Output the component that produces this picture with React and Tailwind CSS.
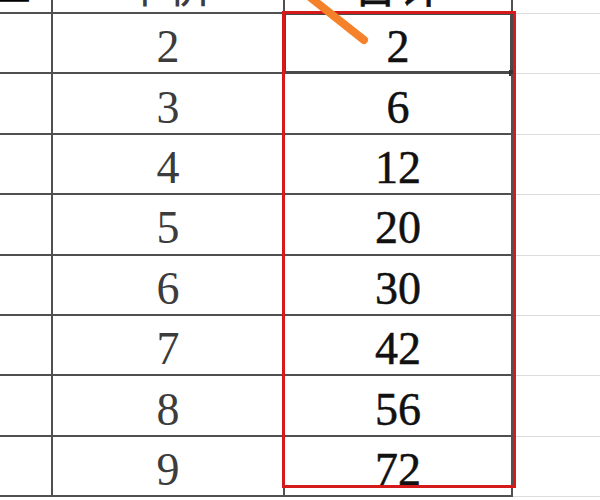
import React from 'react';

const ROWS = [
  [2, 2],
  [3, 6],
  [4, 12],
  [5, 20],
  [6, 30],
  [7, 42],
  [8, 56],
  [9, 72],
];

function Row({ left, mid, right, header, selected }) {
  const cell = 'relative flex h-full items-center border-b-2 border-r-2 border-[#505050]';
  return (
    <div className="flex h-[60.4px]">
      <div className={`${cell} w-[53px] justify-end pr-[20px]`}>
        {header && <span className="whitespace-nowrap">{left}</span>}
      </div>
      <div className={`${cell} w-[232px] justify-center pt-[8px] text-[#3c3c3c]`}>
        <span className="whitespace-nowrap">{mid}</span>
      </div>
      <div className={`${cell} w-[228px] justify-center pt-[8px] text-[#111] [-webkit-text-stroke:0.5px_#111]`}>
        <span className="whitespace-nowrap">{right}</span>
        {selected && (
          <>
            <div className="absolute -left-[2px] -top-[2px] right-[-2px] bottom-[-2px] border-[3px] border-[#4a4a4a]" />
            <div className="absolute -bottom-[4px] -right-[4px] h-[6px] w-[6px] bg-[#333]" />
          </>
        )}
      </div>
      <div className="h-full flex-1 border-b border-[#dcdcdc]" />
    </div>
  );
}

export default function App() {
  return (
    <div className="relative h-[500px] w-[600px] overflow-hidden bg-white font-['Liberation_Serif','Noto_Sans_CJK_SC',serif] text-[46px] leading-none">
      <div className="-mt-[46.4px]">
        <Row header left="数量" mid="单价" right="合计" />
        {ROWS.map(([m, r], i) => (
          <Row key={m} mid={m} right={r} selected={i === 0} />
        ))}
      </div>

      {/* red highlight box */}
      <div className="absolute left-[282px] top-[11px] h-[477px] w-[234px] border-[3px] border-[#d41a1a]" />

      {/* orange arrow stroke */}
      <svg className="absolute left-0 top-0" width="600" height="500" viewBox="0 0 600 500">
        <line x1="306" y1="-6" x2="364" y2="40" stroke="#f5822a" strokeWidth="8" strokeLinecap="round" />
      </svg>
    </div>
  );
}
